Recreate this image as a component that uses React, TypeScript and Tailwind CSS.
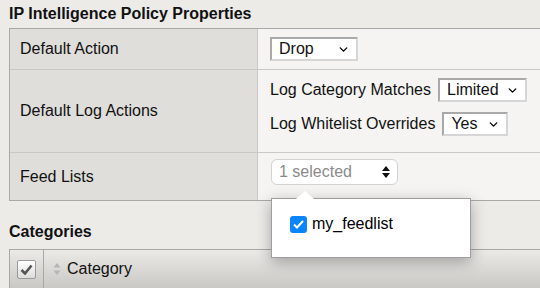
import { ChevronDown } from "lucide-react";

function FakeSelect({ label, width }: { label: string; width: string }) {
  return (
    <div
      className={`flex h-[24px] items-center justify-between border-2 border-[#a9a9a9] border-r-[#d6d6d6] border-b-[#d6d6d6] bg-white pl-[7px] pr-[6px] ${width}`}
    >
      <span>{label}</span>
      <ChevronDown size={13} strokeWidth={2.5} className="text-black" />
    </div>
  );
}

export default function App() {
  return (
    <main
      className="relative h-[288px] w-[540px] overflow-hidden bg-[#ecebe8] pl-[9px] text-[16px] text-[#111]"
      style={{ fontFamily: '"Liberation Sans", Arial, sans-serif' }}
    >
      <h2 className="pt-[5px] pb-[5px] text-[16px] font-bold leading-[18px]">IP Intelligence Policy Properties</h2>

      <div className="w-[560px] border border-[#a8a8a5]">
        <div className="grid grid-cols-[248px_1fr] border-b border-[#c9c8c5]">
          <div className="flex h-[40px] items-center border-r border-[#c9c8c5] bg-[#dfdedb] pl-[10px]">Default Action</div>
          <div className="flex items-center bg-[#f5f4f2] pl-[12px]">
            <FakeSelect label="Drop" width="w-[88px]" />
          </div>
        </div>
        <div className="grid grid-cols-[248px_1fr] border-b border-[#c9c8c5]">
          <div className="flex h-[82px] items-center border-r border-[#c9c8c5] bg-[#dfdedb] pl-[10px]">Default Log Actions</div>
          <div className="flex flex-col gap-[10px] bg-[#f5f4f2] pl-[12px] pt-[8px]">
            <div className="flex items-center gap-[7px]">
              <span>Log Category Matches</span>
              <FakeSelect label="Limited" width="w-[89px]" />
            </div>
            <div className="flex items-center gap-[7px]">
              <span>Log Whitelist Overrides</span>
              <FakeSelect label="Yes" width="w-[66px]" />
            </div>
          </div>
        </div>
        <div className="grid grid-cols-[248px_1fr]">
          <div className="flex h-[47px] items-center border-r border-[#c9c8c5] bg-[#dfdedb] pl-[10px]">Feed Lists</div>
          <div className="bg-[#f5f4f2] pl-[13px] pt-[6px]">
            <div className="flex h-[26px] w-[127px] items-center justify-between rounded-[6px] border border-[#d2d2d2] bg-white pl-[7px] pr-[6px] text-[#8a8a8a]">
              <span>1 selected</span>
              <svg width="10" height="14" viewBox="0 0 10 14">
                <path d="M5 1 L9 6 L1 6 Z" fill="#111" />
                <path d="M5 13 L9 8 L1 8 Z" fill="#111" />
              </svg>
            </div>
          </div>
        </div>
      </div>

      <h2 className="pt-[21px] pb-[8px] text-[16px] font-bold leading-[19px]">Categories</h2>

      <div className="flex h-[40px] w-[560px] border border-[#a8a8a5] bg-gradient-to-b from-[#ebeae7] to-[#c9c8c5]">
        <div className="flex w-[34px] items-center justify-center border-r border-[#a8a8a5]">
          <div className="flex h-[19px] w-[19px] items-center justify-center rounded-[2px] border border-[#9a9a9a] bg-gradient-to-b from-white to-[#dcdcdc]">
            <svg width="13" height="11" viewBox="0 0 13 11">
              <path d="M1.5 6 L5 9.5 L11.5 1.5" fill="none" stroke="#555" strokeWidth="2.6" />
            </svg>
          </div>
        </div>
        <div className="flex items-center gap-[6px] pl-[9px]">
          <svg width="8" height="14" viewBox="0 0 8 14">
            <path d="M4 1 L7.5 5.5 L0.5 5.5 Z" fill="#b5b5b5" />
            <path d="M4 13 L7.5 8.5 L0.5 8.5 Z" fill="#b5b5b5" />
          </svg>
          <span>Category</span>
        </div>
      </div>

      <div className="absolute left-[271px] top-[198px] h-[60px] w-[200px] border border-[#9e9e9e] bg-white shadow-[0_4px_14px_rgba(0,0,0,0.3)]">
        <div className="absolute -top-[8px] left-[24px] h-0 w-0 border-x-[9px] border-b-[8px] border-x-transparent border-b-white" />
        <label className="flex items-center gap-[5px] pl-[18px] pt-[13px]">
          <span className="flex h-[17px] w-[17px] items-center justify-center rounded-[3px] bg-[#0a84ff]">
            <svg width="11" height="9" viewBox="0 0 11 9">
              <path d="M1 4.5 L4 7.5 L10 1" fill="none" stroke="white" strokeWidth="2" />
            </svg>
          </span>
          <span className="text-black">my_feedlist</span>
        </label>
      </div>
    </main>
  );
}
